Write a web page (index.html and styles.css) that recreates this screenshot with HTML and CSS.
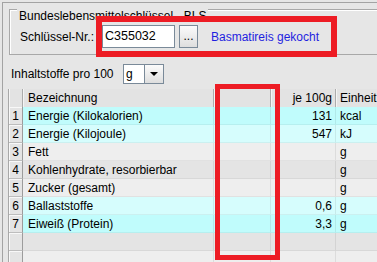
FILE: index.html
```html
<!DOCTYPE html>
<html lang="de">
<head>
    <meta charset="UTF-8">
    <title>BLS Nährwerte</title>
    <link rel="stylesheet" href="styles.css">
</head>
<body>
    <div class="frame">
        <div class="group">
            <div class="group-title">Bundeslebensmittelschlüssel - BLS</div>
            <div class="key-row">
                <span class="key-label">Schlüssel-Nr.:</span>
                <span class="text-field">C355032</span>
                <span class="small-button">...</span>
                <a class="food-link">Basmatireis gekocht</a>
            </div>
        </div>

        <div class="unit-row">
            <span class="unit-label">Inhaltstoffe pro 100</span>
            <span class="combo">
                <span class="combo-value">g</span>
                <span class="combo-arrow"></span>
            </span>
        </div>

        <table class="nutrients">
            <colgroup>
                <col class="c-num">
                <col class="c-name">
                <col class="c-extra">
                <col class="c-value">
                <col class="c-unit">
            </colgroup>
            <thead>
                <tr>
                    <th class="num"></th>
                    <th class="name">Bezeichnung</th>
                    <th></th>
                    <th class="value">je 100g</th>
                    <th class="unit">Einheit</th>
                </tr>
            </thead>
            <tbody>
                <tr class="cyan">
                    <th class="num">1</th><td class="name">Energie (Kilokalorien)</td><td></td><td class="value">131</td><td class="unit">kcal</td>
                </tr>
                <tr class="cyan-light">
                    <th class="num">2</th><td class="name">Energie (Kilojoule)</td><td></td><td class="value">547</td><td class="unit">kJ</td>
                </tr>
                <tr class="grey-light">
                    <th class="num">3</th><td class="name">Fett</td><td></td><td class="value"></td><td class="unit">g</td>
                </tr>
                <tr class="grey">
                    <th class="num">4</th><td class="name">Kohlenhydrate, resorbierbar</td><td></td><td class="value"></td><td class="unit">g</td>
                </tr>
                <tr class="grey-light">
                    <th class="num">5</th><td class="name">Zucker (gesamt)</td><td></td><td class="value"></td><td class="unit">g</td>
                </tr>
                <tr class="cyan-light">
                    <th class="num">6</th><td class="name">Ballaststoffe</td><td></td><td class="value">0,6</td><td class="unit">g</td>
                </tr>
                <tr class="cyan">
                    <th class="num">7</th><td class="name">Eiweiß (Protein)</td><td></td><td class="value">3,3</td><td class="unit">g</td>
                </tr>
                <tr class="grey">
                    <th class="num"></th><td class="name"></td><td></td><td class="value"></td><td class="unit"></td>
                </tr>
                <tr class="grey-light">
                    <th class="num"></th><td class="name"></td><td></td><td class="value"></td><td class="unit"></td>
                </tr>
            </tbody>
        </table>
    </div>

    <div class="mark mark-key"></div>
    <div class="mark mark-column"></div>
</body>
</html>
```

FILE: styles.css
```css
body {
    margin: 0;
    height: 262px;
    overflow: hidden;
    background-color: #e6e6e6;
    font-family: "Liberation Sans", Arial, sans-serif;
    font-size: 12px;
    color: #000;
}

.frame {
    margin: 2px 0 0 2px;
    height: 259px;
    overflow: hidden;
    border-top: 1px solid #a3a3a3;
    border-left: 1px solid #a3a3a3;
}

/* titled group box, its right edge lies outside the window */
.group {
    margin: 6px 0 0 6px;
    padding: 0 0 6px 10px;
    border: 1px solid #a8a8a8;
    border-right: none;
    box-shadow: inset 1px 1px 0 #fff;
}

.group-title {
    width: max-content;
    margin: -1px 0 0 -3px;
    padding: 0 2px;
    line-height: 14px;
    background-color: #e6e6e6;
}

.key-row {
    display: flex;
    align-items: center;
    height: 23px;
    margin-top: 2px;
}

.key-label {
    width: 82px;
}

.text-field {
    box-sizing: border-box;
    width: 73px;
    height: 23px;
    padding-left: 2px;
    border: 1px solid #7a8a99;
    background: #fff;
    font-size: 12.5px;
    line-height: 21px;
}

.small-button {
    box-sizing: border-box;
    width: 19px;
    height: 23px;
    margin-left: 4px;
    border: 1px solid #7a8a99;
    background: linear-gradient(#fbfbfb, #dedede);
    text-align: center;
    line-height: 21px;
}

.food-link {
    margin-left: 13px;
    color: #1f1fe0;
}

/* unit selector */
.unit-row {
    display: flex;
    align-items: center;
    height: 20px;
    margin-top: 9px;
    padding-left: 8px;
}

.unit-label {
    width: 112px;
}

.combo {
    display: flex;
    height: 20px;
    box-sizing: border-box;
    border: 1px solid #7a8a99;
}

.combo-value {
    width: 18px;
    padding-left: 2px;
    border-right: 1px solid #7a8a99;
    background: #fff;
    line-height: 18px;
}

.combo-arrow {
    display: flex;
    align-items: center;
    justify-content: center;
    width: 18px;
    background: linear-gradient(#fbfbfb, #dedede);
}

.combo-arrow::after {
    content: "";
    border-left: 4px solid transparent;
    border-right: 4px solid transparent;
    border-top: 4px solid #000;
}

/* nutrient table, the unit column is cut by the window edge */
.nutrients {
    width: 369px;
    margin: 5px 0 0 5px;
    table-layout: fixed;
    border-collapse: separate;
    border-spacing: 0;
    border-left: 1px solid #a8a8a8;
}

.c-num { width: 14px; }
.c-name { width: 191px; }
.c-extra { width: 57px; }
.c-value { width: 65px; }
.c-unit { width: 41px; }

.nutrients tr {
    height: 18px;
}

.nutrients th,
.nutrients td {
    padding: 0;
    font-weight: normal;
    line-height: 16px;
    white-space: nowrap;
    overflow: hidden;
    text-overflow: clip;
    text-align: left;
}

.nutrients thead th {
    background-color: #e3e3e3;
    border-right: 1px solid #acacac;
    box-shadow: inset 1px 0 0 #f4f4f4;
}

.nutrients thead th.unit {
    border-right: none;
}

.nutrients tbody th.num {
    background-color: #e4e4e4;
    border-right: 1px solid #9c9c9c;
    border-bottom: 1px solid #bdbdbd;
    box-shadow: inset 1px 1px 0 #f8f8f8;
}

.nutrients td {
    border-right: 1px solid rgba(0, 0, 0, 0.07);
    border-bottom: 1px solid rgba(0, 0, 0, 0.05);
}

.nutrients td.unit {
    border-right: none;
}

.nutrients .num {
    text-align: center;
}

.nutrients .name {
    padding-left: 5px;
}

.nutrients .value {
    padding-right: 3px;
    text-align: right;
}

.nutrients .unit {
    padding-left: 4px;
}

.cyan td { background-color: #c0fcfc; }
.cyan-light td { background-color: #d6fdfd; }
.grey td { background-color: #e4e4e4; }
.grey-light td { background-color: #eeeeee; }

/* red annotation boxes drawn over the screenshot */
.mark {
    position: absolute;
    box-sizing: border-box;
    border: 6px solid #ed1c24;
}

.mark-key {
    left: 96px;
    top: 16px;
    width: 241px;
    height: 41px;
}

.mark-column {
    left: 215px;
    top: 84px;
    width: 65px;
    height: 176px;
    border-width: 5px;
}
```
